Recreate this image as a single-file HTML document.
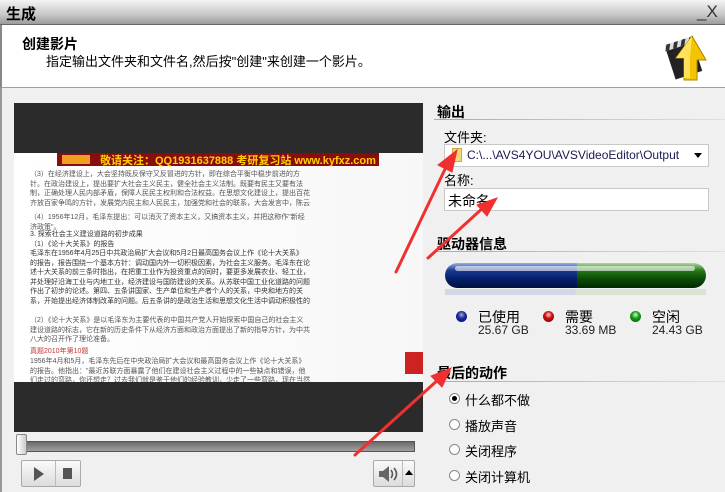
<!DOCTYPE html>
<html><head><meta charset="utf-8"><style>
*{margin:0;padding:0;box-sizing:border-box}
body{width:725px;height:492px;overflow:hidden;background:#f0f0f0;font-family:"Liberation Sans","Noto Sans CJK SC",sans-serif;position:relative;color:#000}
.a{position:absolute}
.t{font-size:13px;white-space:nowrap}
.doc{font-size:7px;line-height:9.5px;color:#555;white-space:normal;overflow:hidden;word-break:break-all}
</style></head><body>
<div class="a" style="left:0;top:0;width:725px;height:25px;background:linear-gradient(#f4f4f4,#c8c8c8 60%,#9c9c9c);border-bottom:1px solid #666"></div>
<div class="a t" style="left:6px;top:3px;font-size:15px;font-weight:bold">生成</div>
<div class="a t" style="left:697px;top:2px;font-size:17px;color:#333">_X</div>
<div class="a" style="left:0;top:25px;width:725px;height:63px;background:#fff;border-bottom:1px solid #a0a0a0;border-left:2px solid #888"></div>
<div class="a t" style="left:22px;top:34px;font-size:14px;font-weight:bold">创建影片</div>
<div class="a t" style="left:46px;top:51px;font-size:13px">指定输出文件夹和文件名,然后按"创建"来创建一个影片。</div>
<svg class="a" style="left:664px;top:30px" width="46" height="52" viewBox="0 0 46 52">
<g transform="rotate(-18 20 30)"><rect x="6" y="16" width="28" height="30" fill="#222"/><rect x="6" y="10" width="30" height="6" fill="#ddd"/><path d="M8 10h4l-3 6h-4zM16 10h4l-3 6h-4zM24 10h4l-3 6h-4zM32 10h4l-3 6h-4z" fill="#333"/></g>
<path d="M20 50 L20 28 L12 28 L28 6 L42 30 L33 30 L33 50 Z" fill="#f5c400" stroke="#b08000" stroke-width="1"/>
<path d="M20 48 L20 28 L12 28 L28 6 L26 28 L26 48Z" fill="#ffe25a"/>
</svg>
<div class="a" style="left:0;top:88px;width:2px;height:404px;background:#999"></div>
<!-- video -->
<div class="a" style="left:14px;top:103px;width:409px;height:329px;background:#2b2b2b"></div>
<div class="a" style="left:14px;top:153px;width:409px;height:229px;background:linear-gradient(90deg,#fff,#f7f7f7)"></div>
<div class="a" style="left:57px;top:153px;width:322px;height:13px;background:#8b0c0c"></div>
<div class="a" style="left:62px;top:155px;width:28px;height:9px;background:#f0a020"></div>
<div class="a t" style="left:100px;top:152px;font-size:11px;font-weight:bold;color:#ffd000">敬请关注：QQ1931637888 考研复习站 www.kyfxz.com</div>
<div class="a doc" style="left:30px;top:170px;width:280px;height:38px">（3）在经济建设上，大会坚持既反保守又反冒进的方针，即在综合平衡中稳步前进的方针。在政治建设上，提出要扩大社会主义民主，健全社会主义法制。既要有民主又要有法制，正确处理人民内部矛盾，保障人民民主权利和合法权益。在思想文化建设上，提出百花齐放百家争鸣的方针，发展党内民主和人民民主，加强党和社会的联系，大会发言中，陈云提出"三个主体三个补充"的思想。</div>
<div class="a doc" style="left:30px;top:213px;width:280px">（4）1956年12月，毛泽东提出：可以消灭了资本主义，又搞资本主义，并把这称作"新经济政策"。</div>
<div class="a doc" style="left:30px;top:230px;width:280px;height:76px;color:#333">3. 探索社会主义建设道路的初步成果<br>（1）《论十大关系》的报告<br>毛泽东在1956年4月25日中共政治局扩大会议和5月2日最高国务会议上作《论十大关系》的报告，报告围绕一个基本方针：调动国内外一切积极因素，为社会主义服务。毛泽东在论述十大关系的前三条时指出，在把重工业作为投资重点的同时，要更多发展农业、轻工业，并处理好沿海工业与内地工业，经济建设与国防建设的关系。从苏联中国工业化道路的问题作出了初步的论述。第四、五条讲国家、生产单位和生产者个人的关系，中央和地方的关系，开始提出经济体制改革的问题。后五条讲的是政治生活和思想文化生活中调动积极性的问题。毛泽东提出"长期共存，互相监督"的方针，提出"向外国学习"的口号。百花齐放百家争鸣。</div>
<div class="a doc" style="left:30px;top:316px;width:280px;height:28px">（2）《论十大关系》是以毛泽东为主要代表的中国共产党人开始探索中国自己的社会主义建设道路的标志，它在新的历史条件下从经济方面和政治方面提出了新的指导方针，为中共八大的召开作了理论准备。</div>
<div class="a doc" style="left:30px;top:347px;width:280px;color:#c33">真题2010年第10题</div>
<div class="a doc" style="left:30px;top:357px;width:280px;height:25px">1956年4月和5月，毛泽东先后在中央政治局扩大会议和最高国务会议上作《论十大关系》的报告。他指出："最近苏联方面暴露了他们在建设社会主义过程中的一些缺点和错误，他们走过的弯路，你还想走？过去我们就是鉴于他们的经验教训，少走了一些弯路，现在当然更要引以为戒。"这表明，以毛泽东为主要代表的中国共产党人</div>
<div class="a" style="left:405px;top:352px;width:18px;height:22px;background:#c22;"></div>
<!-- slider -->
<div class="a" style="left:16px;top:441px;width:399px;height:11px;background:linear-gradient(#6a6a6a,#a0a0a0);border:1px solid #555"></div>
<div class="a" style="left:16px;top:434px;width:11px;height:21px;background:linear-gradient(90deg,#fff,#ccc);border:1px solid #888;border-radius:2px"></div>
<div class="a" style="left:21px;top:460px;width:60px;height:27px;background:linear-gradient(#fafafa,#dcdcdc);border:1px solid #aaa;border-radius:2px"></div>
<div class="a" style="left:55px;top:461px;width:1px;height:25px;background:#bbb"></div>
<div class="a" style="left:34px;top:467px;width:0;height:0;border-left:10px solid #555;border-top:7px solid transparent;border-bottom:7px solid transparent"></div>
<div class="a" style="left:63px;top:468px;width:9px;height:11px;background:#555"></div>
<div class="a" style="left:373px;top:460px;width:42px;height:27px;background:linear-gradient(#fafafa,#dcdcdc);border:1px solid #aaa;border-radius:2px"></div>
<div class="a" style="left:402px;top:461px;width:1px;height:25px;background:#bbb"></div>
<svg class="a" style="left:377px;top:465px" width="22" height="18"><path d="M2 6h4l6-5v16l-6-5H2z" fill="#666"/><path d="M14 5q3 4 0 8M17 3q5 6 0 12" stroke="#555" stroke-width="1.6" fill="none"/></svg>
<div class="a" style="left:405px;top:470px;border-bottom:5px solid #000;border-left:4px solid transparent;border-right:4px solid transparent"></div>
<!-- right panel -->
<div class="a t" style="left:437px;top:102px;font-weight:bold;font-size:14px">输出</div>
<div class="a" style="left:434px;top:119px;width:291px;height:1px;background:linear-gradient(90deg,#aaa,#e0e0e0)"></div>
<div class="a t" style="left:444px;top:127px">文件夹:</div>
<div class="a" style="left:444px;top:144px;width:265px;height:23px;background:#fff;border:1px solid #c8c8c8"></div>
<div class="a" style="left:452px;top:148px;width:10px;height:14px;background:#f5d87a;border:1px solid #d0a840"></div>
<div class="a t" style="left:467px;top:148px;font-size:12px;color:#1a1a50">C:\...\AVS4YOU\AVSVideoEditor\Output</div>
<div class="a" style="left:694px;top:153px;border-top:5px solid #000;border-left:4px solid transparent;border-right:4px solid transparent"></div>
<div class="a t" style="left:444px;top:170px">名称:</div>
<div class="a" style="left:444px;top:188px;width:265px;height:23px;background:#fff;border:1px solid #c8c8c8"></div>
<div class="a t" style="left:448px;top:191px;font-size:14px">未命名</div>
<div class="a t" style="left:437px;top:234px;font-weight:bold;font-size:14px">驱动器信息</div>
<div class="a" style="left:434px;top:251px;width:291px;height:1px;background:linear-gradient(90deg,#aaa,#e0e0e0)"></div>
<div class="a" style="left:445px;top:263px;width:261px;height:25px;border-radius:13px;overflow:hidden">
<div style="position:absolute;left:0;top:0;width:132px;height:25px;background:linear-gradient(#9ab0e0,#1a3a90 30%,#062070 60%,#001040)"></div>
<div style="position:absolute;left:132px;top:0;width:129px;height:25px;background:linear-gradient(#b0d8a0,#287818 30%,#0c5008 60%,#002800)"></div>
<div style="position:absolute;left:10px;top:3px;width:240px;height:5px;border-radius:3px;background:rgba(255,255,255,.6)"></div>
</div>
<div class="a" style="left:445px;top:289px;width:261px;height:6px;background:linear-gradient(90deg,#c6cde0 50%,#cfe0c6 50%);opacity:.7"></div>
<div class="a" style="left:456px;top:311px;width:11px;height:11px;border-radius:50%;background:radial-gradient(circle at 50% 35%,#aac 0,#1a2aa0 40%,#000860)"></div>
<div class="a" style="left:543px;top:311px;width:11px;height:11px;border-radius:50%;background:radial-gradient(circle at 50% 35%,#fcc 0,#d01010 40%,#600)"></div>
<div class="a" style="left:630px;top:311px;width:11px;height:11px;border-radius:50%;background:radial-gradient(circle at 50% 35%,#cfc 0,#1a9a1a 40%,#050)"></div>
<div class="a t" style="left:478px;top:307px;font-size:14px">已使用</div>
<div class="a t" style="left:478px;top:323px;font-size:12px;color:#222">25.67 GB</div>
<div class="a t" style="left:565px;top:307px;font-size:14px">需要</div>
<div class="a t" style="left:565px;top:323px;font-size:12px;color:#222">33.69 MB</div>
<div class="a t" style="left:652px;top:307px;font-size:14px">空闲</div>
<div class="a t" style="left:652px;top:323px;font-size:12px;color:#222">24.43 GB</div>
<div class="a t" style="left:437px;top:363px;font-weight:bold;font-size:14px">最后的动作</div>
<div class="a" style="left:434px;top:381px;width:291px;height:1px;background:linear-gradient(90deg,#aaa,#e0e0e0)"></div>
<div class="a" style="left:449px;top:393px;width:11px;height:11px;border-radius:50%;border:1px solid #888;background:#fff"></div>
<div class="a" style="left:452px;top:396px;width:5px;height:5px;border-radius:50%;background:#000"></div>
<div class="a" style="left:449px;top:419px;width:11px;height:11px;border-radius:50%;border:1px solid #888;background:#fff"></div>
<div class="a" style="left:449px;top:444px;width:11px;height:11px;border-radius:50%;border:1px solid #888;background:#fff"></div>
<div class="a" style="left:449px;top:470px;width:11px;height:11px;border-radius:50%;border:1px solid #888;background:#fff"></div>
<div class="a t" style="left:465px;top:390px">什么都不做</div>
<div class="a t" style="left:465px;top:416px">播放声音</div>
<div class="a t" style="left:465px;top:441px">关闭程序</div>
<div class="a t" style="left:465px;top:467px">关闭计算机</div>
<!-- arrows -->
<svg class="a" style="left:0;top:0" width="725" height="492">
<g fill="#f03030" stroke="#f03030" stroke-linecap="round">
<line x1="396" y1="272" x2="447" y2="165" stroke-width="3"/><path d="M457 150 L452 172 L438 165Z"/>
<line x1="428" y1="258" x2="485" y2="206" stroke-width="3"/><path d="M497 198 L487 216 L477 205Z"/>
<line x1="355" y1="455" x2="440" y2="378" stroke-width="3"/><path d="M451 368 L442 387 L431 376Z"/>
</g></svg>
</body></html>
